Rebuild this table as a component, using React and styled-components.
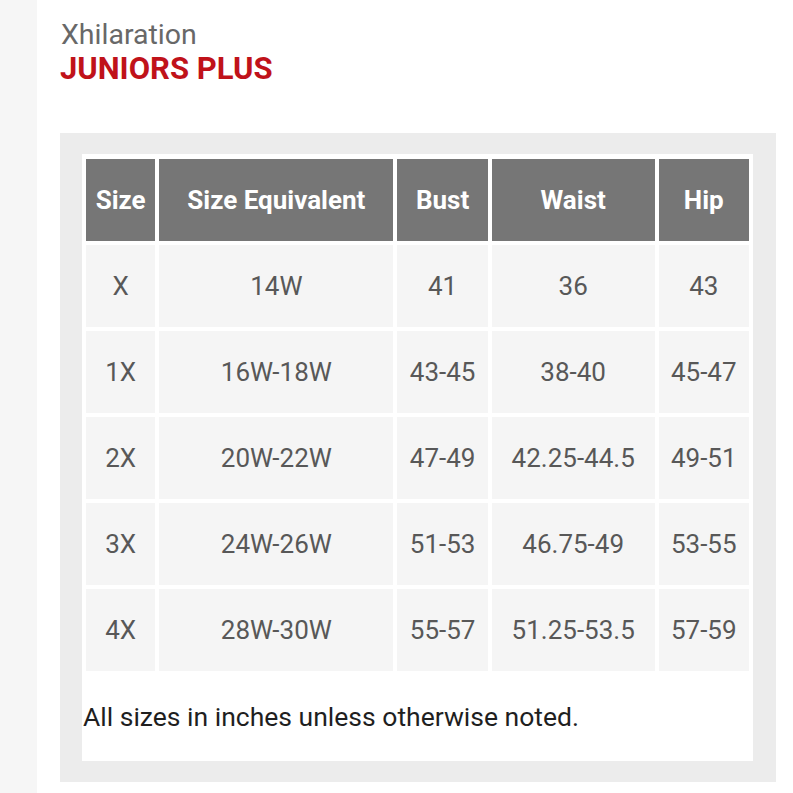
import React from "react";
import styled, { createGlobalStyle } from "styled-components";

const GlobalStyle = createGlobalStyle`
  html, body {
    margin: 0;
    padding: 0;
    background: #ffffff;
    font-family: Roboto, "Liberation Sans", Arial, sans-serif;
  }
`;

const columns = [
  { label: "Size", width: 69 },
  { label: "Size Equivalent", width: 233 },
  { label: "Bust", width: 90 },
  { label: "Waist", width: 162 },
  { label: "Hip", width: 90 },
];

const rows = [
  ["X", "14W", "41", "36", "43"],
  ["1X", "16W-18W", "43-45", "38-40", "45-47"],
  ["2X", "20W-22W", "47-49", "42.25-44.5", "49-51"],
  ["3X", "24W-26W", "51-53", "46.75-49", "53-55"],
  ["4X", "28W-30W", "55-57", "51.25-53.5", "57-59"],
];

const Page = styled.div`
  display: flex;
  min-height: 793px;
`;

const Rail = styled.aside`
  width: 37px;
  flex-shrink: 0;
  background: #f6f6f6;
`;

const Main = styled.main`
  flex: 1;
  padding: 18px 17px 12px 23px;
`;

const Brand = styled.div`
  font-size: 28.5px;
  line-height: 34px;
  color: #686868;
  margin-left: 1px;
`;

const Category = styled.h1`
  margin: 0;
  font-size: 31px;
  line-height: 34px;
  font-weight: 700;
  color: #c0121a;
`;

const ChartBox = styled.section`
  margin-top: 47px;
  background: #ececec;
  padding: 21px 23px 21px 22px;
`;

const Panel = styled.div`
  background: #ffffff;
  padding: 1px 0 28px;
`;

const Table = styled.table`
  width: 100%;
  table-layout: fixed;
  border-collapse: separate;
  border-spacing: 4.5px;
`;

const HeadCell = styled.th`
  width: ${(p) => p.$w}px;
  height: 82px;
  padding: 0;
  background: #767676;
  color: #ffffff;
  font-size: 26px;
  font-weight: 700;
  text-align: center;
  vertical-align: middle;
`;

const Cell = styled.td`
  height: 82px;
  padding: 0;
  background: #f5f5f5;
  color: #585858;
  font-size: 26px;
  text-align: center;
  vertical-align: middle;
  white-space: nowrap;
`;

const Note = styled.p`
  margin: 26px 0 0 1px;
  font-size: 26.5px;
  line-height: 32px;
  color: #1f1f1f;
`;

export default function App() {
  return (
    <>
      <GlobalStyle />
      <Page>
        <Rail />
        <Main>
          <Brand>Xhilaration</Brand>
          <Category>JUNIORS PLUS</Category>
          <ChartBox>
            <Panel>
              <Table>
                <thead>
                  <tr>
                    {columns.map((c) => (
                      <HeadCell key={c.label} $w={c.width}>
                        {c.label}
                      </HeadCell>
                    ))}
                  </tr>
                </thead>
                <tbody>
                  {rows.map((r) => (
                    <tr key={r[0]}>
                      {r.map((v, i) => (
                        <Cell key={i}>{v}</Cell>
                      ))}
                    </tr>
                  ))}
                </tbody>
              </Table>
              <Note>All sizes in inches unless otherwise noted.</Note>
            </Panel>
          </ChartBox>
        </Main>
      </Page>
    </>
  );
}
